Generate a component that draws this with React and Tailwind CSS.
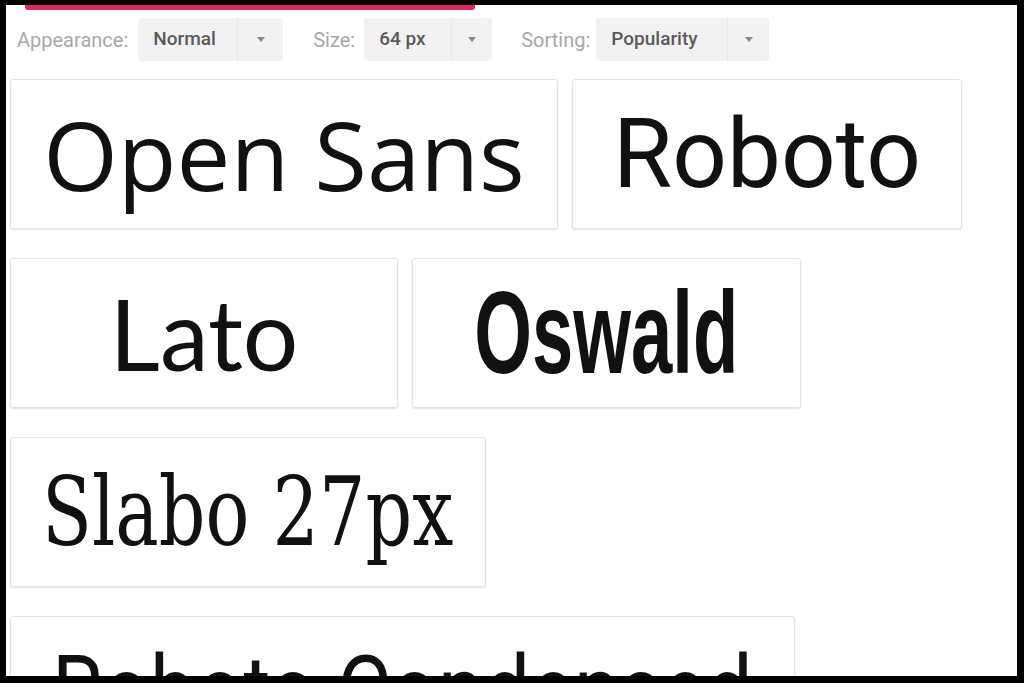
import React from 'react';

const fonts = [
  { name: 'Open Sans', width: 'w-[548px]', text: 'font-["Open_Sans",sans-serif]' },
  { name: 'Roboto', width: 'w-[390px]', text: 'font-["Roboto",sans-serif]' },
  { name: 'Lato', width: 'w-[388px]', text: 'font-["Lato",sans-serif] text-[98px]' },
  { name: 'Oswald', width: 'w-[389px]', text: 'font-["Liberation_Sans",sans-serif] font-bold text-[116px] scale-x-[0.64]' },
  { name: 'Slabo 27px', width: 'w-[476px]', text: 'font-["DejaVu_Serif",serif] scale-x-[0.76]' },
  { name: 'Roboto Condensed', width: 'w-[785px]', text: 'font-["Roboto",sans-serif] scale-x-[0.86]' },
];

function Caret() {
  return (
    <svg width="8" height="5" viewBox="0 0 8 5" className="fill-[#8a8a8a]">
      <path d="M0 0h8L4 5z" />
    </svg>
  );
}

function Select({ value, textW, caretW }) {
  return (
    <div className="flex h-[43px] rounded-[4px] bg-[#f2f2f2]">
      <div className={`${textW} flex items-center pl-[15px] text-[19px] font-medium text-[#5a5a5a]`}>{value}</div>
      <div className={`${caretW} flex items-center justify-center border-l border-[#e7e7e7]`}>
        <Caret />
      </div>
    </div>
  );
}

export default function App() {
  return (
    <div className="h-[683px] overflow-hidden bg-black pt-[5px] pr-[7px] pb-[7px] pl-[6px]">
      <div className="h-full overflow-hidden bg-white font-['Roboto',sans-serif]">
        {/* top accent */}
        <div className="ml-[19px] h-[5px] w-[450px] rounded-b-[3px] bg-[#de2a5e]" />

        {/* toolbar */}
        <div className="mt-[8px] flex h-[43px] items-center pl-[11px] text-[20px] text-[#a8a8a8]">
          <span>Appearance:</span>
          <div className="ml-[10px]">
            <Select value="Normal" textW="w-[99px]" caretW="w-[46px]" />
          </div>
          <span className="ml-[30px]">Size:</span>
          <div className="ml-[9px]">
            <Select value="64 px" textW="w-[87px]" caretW="w-[41px]" />
          </div>
          <span className="ml-[29px]">Sorting:</span>
          <div className="ml-[6px]">
            <Select value="Popularity" textW="w-[131px]" caretW="w-[42px]" />
          </div>
        </div>

        {/* font cards */}
        <div className="mt-[18px] flex flex-wrap gap-x-[14px] gap-y-[29px] pl-[4px]">
          {fonts.map((f) => (
            <div
              key={f.name}
              className={`${f.width} flex h-[150px] shrink-0 items-center justify-center rounded-[3px] border border-[#e3e3e3] shadow-[0_1px_2px_rgba(0,0,0,0.12)]`}
            >
              <span className={`inline-block whitespace-nowrap text-[96px] leading-none text-[#111] ${f.text}`}>
                {f.name}
              </span>
            </div>
          ))}
        </div>
      </div>
    </div>
  );
}
